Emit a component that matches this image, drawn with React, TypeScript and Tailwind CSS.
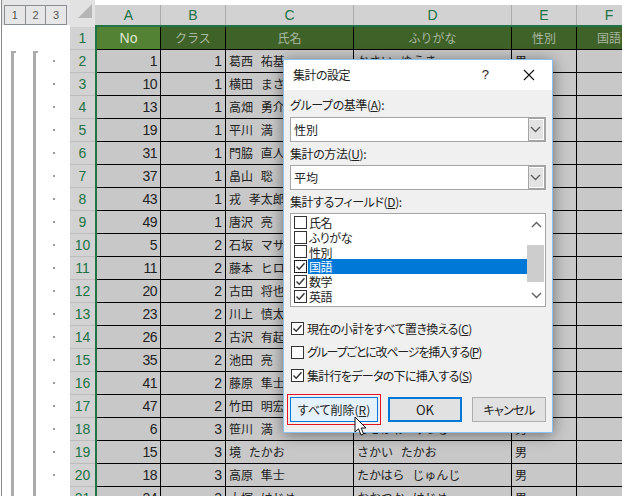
const rows: [number, number, string, string, string][] = [
  [1, 1, "葛西 祐基", "かさい ゆうき", "男"],
  [10, 1, "横田 まさし", "", ""],
  [13, 1, "高畑 勇介", "", ""],
  [19, 1, "平川 満", "", ""],
  [31, 1, "門脇 直人", "", ""],
  [37, 1, "畠山 聡", "", ""],
  [43, 1, "戎 孝太郎", "", ""],
  [49, 1, "唐沢 亮", "", ""],
  [5, 2, "石坂 マサ", "", ""],
  [11, 2, "藤本 ヒロ", "", ""],
  [20, 2, "古田 将也", "", ""],
  [23, 2, "川上 慎太", "", ""],
  [26, 2, "古沢 有起", "", ""],
  [35, 2, "池田 亮", "", ""],
  [41, 2, "藤原 隼士", "", ""],
  [47, 2, "竹田 明宏", "", ""],
  [6, 3, "笹川 満", "ささがわ みつる", "男"],
  [15, 3, "境 たかお", "さかい たかお", "男"],
  [18, 3, "高原 隼士", "たかはら じゅんじ", "男"],
  [24, 3, "大塚 はじめ", "おおつか はじめ", "男"],
];

const cols = [
  { label: "A", width: "w-[64px]", head: "No" },
  { label: "B", width: "w-[65px]", head: "クラス" },
  { label: "C", width: "w-[128px]", head: "氏名" },
  { label: "D", width: "w-[158px]", head: "ふりがな" },
  { label: "E", width: "w-[65px]", head: "性別" },
  { label: "F", width: "w-[65px]", head: "国語" },
];

const fields = [
  { name: "氏名", checked: false },
  { name: "ふりがな", checked: false },
  { name: "性別", checked: false },
  { name: "国語", checked: true, selected: true },
  { name: "数学", checked: true },
  { name: "英語", checked: true },
];

const options = [
  { hot: "C", text: "現在の小計をすべて置き換える", checked: true, track: "tracking-[-0.6px]" },
  { hot: "P", text: "グループごとに改ページを挿入する", checked: false, track: "tracking-[-1.2px]" },
  { hot: "S", text: "集計行をデータの下に挿入する", checked: true, track: "tracking-[-0.7px]" },
];

const jp = "font-['Noto_Sans_CJK_JP','Liberation_Sans',sans-serif]";
const palt = "[font-feature-settings:'palt']";

function Chevron({ up = false }: { up?: boolean }) {
  return (
    <svg width="11" height="7" viewBox="0 0 11 7" fill="none" stroke="#606060" strokeWidth="1.4">
      <path d={up ? "M1 6 L5.5 1.5 L10 6" : "M1 1 L5.5 5.5 L10 1"} />
    </svg>
  );
}

function Checkbox({ checked }: { checked: boolean }) {
  return (
    <div className="flex h-[13px] w-[13px] shrink-0 items-center justify-center border border-[#333333] bg-white">
      {checked && (
        <svg width="11" height="11" viewBox="0 0 11 11" fill="none" stroke="#333333" strokeWidth="1.4">
          <path d="M1.5 5.5 L4.2 8.2 L9.5 2.2" />
        </svg>
      )}
    </div>
  );
}

function Combo({ value }: { value: string }) {
  return (
    <div className="flex h-[25px] items-stretch border border-[#a5a5a5] bg-white">
      <div className="flex flex-1 items-center pl-[3px] text-[12px] text-[#222222]">{value}</div>
      <div className="flex w-[17px] items-center justify-center border-[2px] border-white border-l-0 bg-[#e3e3e3] outline outline-1 -outline-offset-1 outline-[#a5a5a5]">
        <Chevron />
      </div>
    </div>
  );
}

function Label({
  children,
  hot,
  after,
  track = "tracking-[-0.4px]",
}: {
  children: string;
  hot: string;
  after?: string;
  track?: string;
}) {
  return (
    <div className={`text-[12px] leading-[18px] text-[#222222] ${track} ${palt}`}>
      {children}(<span className="underline">{hot}</span>){after}
    </div>
  );
}

function Dialog() {
  return (
    <div className={`absolute left-[283px] top-[59px] flex h-[374px] w-[270px] flex-col border border-[#8cc0ec] bg-[#f0f0f0] shadow-[0_2px_14px_rgba(0,0,0,0.45)] ${jp}`}>
      <div className="flex h-[30px] shrink-0 items-center bg-white pl-[9px] pr-[17px]">
        <span className={`flex-1 text-[12px] tracking-[-0.5px] text-[#222222] ${palt}`}>集計の設定</span>
        <span className="mr-[34px] font-['Liberation_Sans',sans-serif] text-[13px] text-[#222222]">?</span>
        <svg width="12" height="12" viewBox="0 0 12 12" fill="none" stroke="#111111" strokeWidth="1.1">
          <path d="M1 1 L11 11 M11 1 L1 11" />
        </svg>
      </div>
      <div className="flex flex-1 flex-col px-[6px] pt-[6px]">
        <Label hot="A" after=":">グループの基準</Label>
        <div className="mt-[3px]">
          <Combo value="性別" />
        </div>
        <div className="mt-[3px]">
          <Label hot="U" after=":">集計の方法</Label>
        </div>
        <div className="mt-[2px]">
          <Combo value="平均" />
        </div>
        <div className="mt-[3px]">
          <Label hot="D" after=":">集計するフィールド</Label>
        </div>
        <div className="mt-[2px] flex h-[94px] border border-[#a5a5a5] bg-white py-[1px] pl-[1px]">
          <div className="flex flex-1 flex-col">
            {fields.map((f) => (
              <div key={f.name} className="flex h-[14.8px] items-center pl-[2px]">
                <div className={f.selected ? "outline outline-1 -outline-offset-1 outline-dotted outline-black" : ""}>
                  <Checkbox checked={f.checked} />
                </div>
                <div className={`ml-[1px] flex h-[15px] flex-1 items-center pl-[1px] text-[12px] leading-[15px] tracking-[-0.4px] ${palt} ${f.selected ? "bg-[#0078d7] text-white" : "text-[#222222]"}`}>
                  {f.name}
                </div>
              </div>
            ))}
          </div>
          <div className="relative flex w-[18px] flex-col items-center justify-between py-[6px]">
            <Chevron up />
            <div className="absolute left-0 top-[30px] h-[37px] w-[17px] bg-[#cdcdcd]" />
            <Chevron />
          </div>
        </div>
        <div className="mt-[15px] flex flex-col gap-[10.5px] pl-[1px]">
          {options.map((o) => (
            <div key={o.hot} className="flex h-[13px] items-center gap-[3px]">
              <Checkbox checked={o.checked} />
              <Label hot={o.hot} track={o.track}>{o.text}</Label>
            </div>
          ))}
        </div>
        <div className="mt-[15px] flex items-center">
          <div className="relative flex h-[25px] w-[88px] items-center justify-center border border-[#0078d7] bg-[#e5f1fb]">
            <div className={`text-[12px] text-[#222222] ${palt}`}>
              すべて削除(<span className="underline">R</span>)
            </div>
            <div className="absolute -inset-[4px] border border-[#e81123]" />
          </div>
          <div className="ml-[10px] flex h-[25px] w-[74px] items-center justify-center border-2 border-[#0078d7] bg-[#e1e1e1] text-[13px] text-[#222222]">
            OK
          </div>
          <div className={`ml-[10px] flex h-[25px] w-[74px] items-center justify-center border border-[#adadad] bg-[#e1e1e1] text-[12px] tracking-[-0.6px] text-[#222222] ${palt}`}>
            キャンセル
          </div>
        </div>
      </div>
    </div>
  );
}

export default function App() {
  return (
    <div className={`relative flex h-[496px] w-[622px] overflow-hidden bg-white ${jp}`}>
      <div className="w-[2px] shrink-0 border-r border-[#8a8a8a]" />
      <div className="flex w-[68px] shrink-0 flex-col">
        <div className="h-[25px] shrink-0 bg-[#e6e6e6] pl-[2px] pt-[5px]">
          <div className="flex h-[20px] w-[63px] border border-[#8a8f96] bg-[#e6e6e6]">
            {[1, 2, 3].map((n) => (
              <div
                key={n}
                className="flex flex-1 items-center justify-center border-r border-[#8a8f96] font-['Liberation_Sans',sans-serif] text-[11px] text-[#555555] last:border-r-0"
              >
                {n}
              </div>
            ))}
          </div>
        </div>
        <div className="flex flex-1 pl-[9px] pt-[26px]">
          <div className="h-[500px] w-[5px] border-l-[3px] border-t-2 border-[#ababab]" />
          <div className="ml-[17px] h-[500px] w-[5px] border-l-[3px] border-t-2 border-[#ababab]" />
          <div className="ml-[15px] flex flex-col pt-[9px]">
            {rows.map((r) => (
              <div key={r[0]} className="h-[23px]">
                <div className="h-[2px] w-[2px] bg-[#9a9a9a]" />
              </div>
            ))}
          </div>
        </div>
      </div>
      <div className="flex w-[25px] shrink-0 flex-col bg-[#d2d2d2]">
        <div className="flex h-[27px] shrink-0 items-start justify-center bg-[#e2e2e2] pl-[4px] pt-[4px]">
          <svg width="14" height="14" viewBox="0 0 14 14">
            <path d="M14 0 V14 H0 Z" fill="#b5b5b5" />
          </svg>
        </div>
        {[1, ...rows.map((_, i) => i + 2)].map((n) => (
          <div
            key={n}
            className="flex h-[23px] shrink-0 items-center justify-center border-b border-[#bcbcbc] font-['Liberation_Sans',sans-serif] text-[14px] text-[#217346]"
          >
            {n}
          </div>
        ))}
      </div>
      <div className="flex min-w-0 flex-1 flex-col">
        <div className="mt-[5px] flex h-[20px] shrink-0 bg-[#d2d2d2]">
          <div className="w-[2px] shrink-0" />
          {cols.map((c) => (
            <div
              key={c.label}
              className={`flex shrink-0 items-center justify-center border-r border-[#ababab] font-['Liberation_Sans',sans-serif] text-[14px] text-[#217346] ${c.width}`}
            >
              {c.label}
            </div>
          ))}
        </div>
        <div className="flex flex-1 flex-col border-l-2 border-t-2 border-[#217346] bg-[#c8c8c8]">
          <div className="flex h-[23px] shrink-0">
            {cols.map((c, i) => (
              <div
                key={c.label}
                className={`flex shrink-0 items-center justify-center border-b border-r border-black text-[12px] ${c.width} ${
                  i === 0 ? "bg-[#548235] font-['Liberation_Sans',sans-serif] text-[14px] text-[#dce6d0]" : "bg-[#3f6228] text-[#a9b8a0]"
                }`}
              >
                {c.head}
              </div>
            ))}
          </div>
          {rows.map((r) => (
            <div key={r[0]} className="flex h-[23px] shrink-0 text-[12px] text-[#222222]">
              <div className="flex w-[64px] shrink-0 items-center justify-end border-b border-r border-black pr-[3px] font-['Liberation_Sans',sans-serif] text-[14px] tracking-[-0.5px]">
                {r[0]}
              </div>
              <div className="flex w-[65px] shrink-0 items-center justify-end border-b border-r border-black pr-[3px] font-['Liberation_Sans',sans-serif] text-[14px]">
                {r[1]}
              </div>
              <div className="flex w-[128px] shrink-0 items-center whitespace-pre border-b border-r border-black pl-[3px] [word-spacing:5px]">
                {r[2]}
              </div>
              <div className="flex w-[158px] shrink-0 items-center whitespace-pre border-b border-r border-black pl-[3px] [word-spacing:5px]">
                {r[3]}
              </div>
              <div className="flex w-[65px] shrink-0 items-center border-b border-r border-black pl-[3px]">{r[4]}</div>
              <div className="w-[65px] shrink-0 border-b border-r border-black" />
            </div>
          ))}
        </div>
      </div>
      <Dialog />
      <svg className="absolute left-[354px] top-[416px]" width="13" height="21" viewBox="0 0 13 21">
        <path d="M1 1 V16 L4.5 12.8 L7 19 L9.6 18 L7.2 12 H12 Z" fill="#ffffff" stroke="#111111" strokeWidth="1" />
      </svg>
    </div>
  );
}
